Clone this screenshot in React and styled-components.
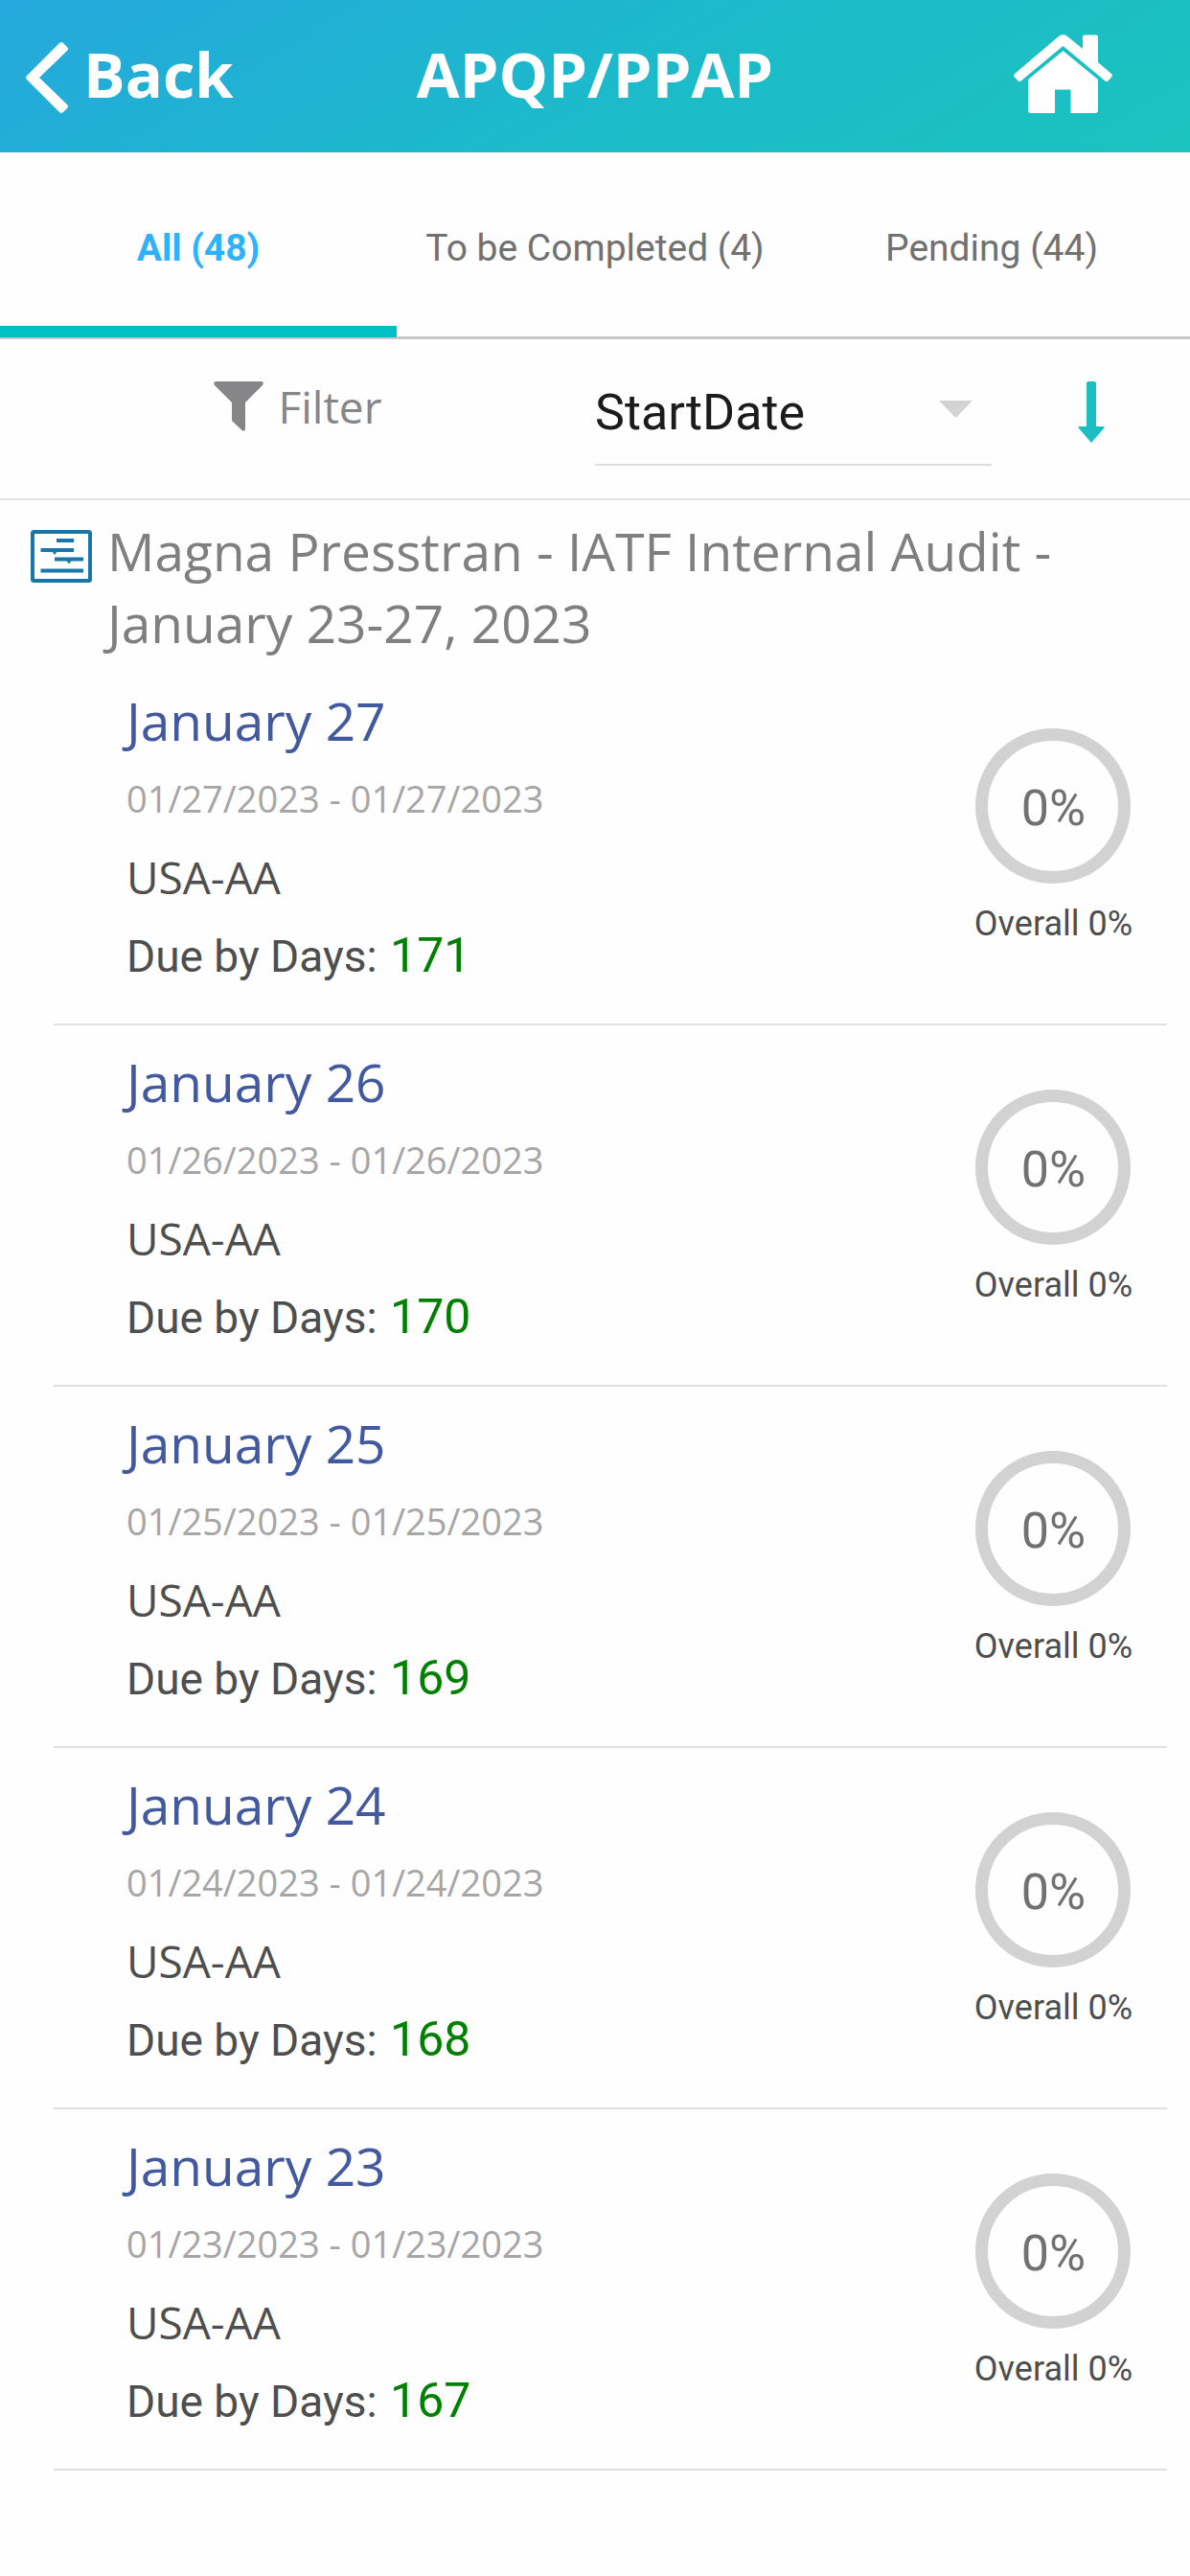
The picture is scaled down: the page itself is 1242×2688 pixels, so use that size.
import React, { useState } from 'react'
import styled, { createGlobalStyle } from 'styled-components'

const GlobalStyle = createGlobalStyle`
  * {
    box-sizing: border-box;
  }
  body {
    margin: 0;
    background: #fefefe;
    font-family: 'Open Sans', sans-serif;
  }
  button {
    padding: 0;
    border: none;
    background: none;
    font: inherit;
    color: inherit;
    cursor: pointer;
  }
  svg {
    display: block;
    flex-shrink: 0;
  }
`

const Header = styled.header`
  display: grid;
  grid-template-columns: 1fr auto 1fr;
  align-items: center;
  height: 159px;
  padding: 0 27px 5px;
  background: linear-gradient(150deg, #25a8dd 0%, #1bbcc8 60%, #1bc3be 100%);
  color: #fff;
  font-size: 65px;
  font-weight: 700;
  line-height: 90px;
`

const BackButton = styled.button`
  display: flex;
  align-items: center;
  gap: 16px;
  justify-self: start;

  svg {
    margin-top: 8px;
  }
`

const Title = styled.h1`
  margin: 0;
  font-size: inherit;
  text-align: center;
`

const HomeLink = styled.a`
  justify-self: end;
  margin-right: 54px;
  color: inherit;
`

const Tabs = styled.div`
  display: grid;
  grid-template-columns: repeat(3, 1fr);
  border-bottom: 3px solid #c8c8c8;
`

const Tab = styled.button`
  height: 193px;
  margin-bottom: -1px;
  padding-top: 18px;
  border-bottom: 12px solid ${({ $active }) => ($active ? '#00bfc5' : 'transparent')};
  color: ${({ $active }) => ($active ? '#2fb2fb' : '#717171')};
  font-family: Roboto, sans-serif;
  font-size: 39px;
  font-weight: ${({ $active }) => ($active ? 700 : 400)};
`

const Toolbar = styled.div`
  display: grid;
  grid-template-columns: 3fr 2fr 1fr;
  height: 168px;
  padding-top: 24px;
  border-bottom: 2px solid #e0e0e0;
`

const FilterButton = styled.button`
  display: flex;
  align-items: center;
  justify-content: center;
  gap: 16px;
  height: 92px;
  color: #868688;
  font-size: 46px;
`

const SelectWrap = styled.div`
  position: relative;
  height: 108px;
  border-bottom: 2px solid #dcdcdc;
`

const Select = styled.select`
  width: 100%;
  height: 104px;
  padding: 0;
  border: none;
  appearance: none;
  background: transparent;
  color: #1b1b1b;
  font-family: Roboto, sans-serif;
  font-size: 52px;
`

const Caret = styled.svg`
  position: absolute;
  top: 40px;
  right: 20px;
  pointer-events: none;
`

const SortButton = styled.button`
  display: flex;
  align-items: center;
  justify-content: center;
  height: 104px;
`

const Group = styled.section`
  padding: 15px 24px 0 32px;
`

const GroupTitle = styled.h2`
  display: flex;
  gap: 16px;
  margin: 0 0 6px;
  color: #7f7f7f;
  font-size: 55px;
  font-weight: 400;
  line-height: 75px;

  svg {
    margin-top: 16px;
  }
`

const List = styled.ul`
  margin: 0;
  padding: 0 0 0 24px;
  list-style: none;
`

const Item = styled.li`
  display: flex;
  justify-content: space-between;
  height: 377px;
  padding: 19px 36px 0 76px;
  border-bottom: 2px solid #e0e0e0;
`

const Day = styled.h3`
  margin: 0;
  color: #43599f;
  font-size: 55px;
  font-weight: 400;
  line-height: 80px;
`

const Line = styled.p`
  margin: 0;
  color: #4e4e4e;
  font-size: 46px;
  line-height: 82px;
`

const Range = styled(Line)`
  color: #a6a6a6;
  font-size: 38px;
`

const Due = styled(Line)`
  font-family: Roboto, sans-serif;
`

const DueDays = styled.span`
  margin-left: 2px;
  color: #008000;
  font-size: 50px;
`

const Progress = styled.div`
  display: flex;
  flex-direction: column;
  align-items: center;
  gap: 20px;
  padding-top: 48px;
  color: #4e4e4e;
  font-family: Roboto, sans-serif;
  font-size: 36px;
  line-height: 44px;
`

const Ring = styled.div`
  display: flex;
  align-items: center;
  justify-content: center;
  width: 162px;
  height: 162px;
  padding-top: 6px;
  border: 13px solid #d2d2d2;
  border-radius: 50%;
  color: #717171;
  font-size: 52px;
`

const TABS = ['All (48)', 'To be Completed (4)', 'Pending (44)']

const AUDITS = [
  { day: 'January 27', date: '01/27/2023', due: 171 },
  { day: 'January 26', date: '01/26/2023', due: 170 },
  { day: 'January 25', date: '01/25/2023', due: 169 },
  { day: 'January 24', date: '01/24/2023', due: 168 },
  { day: 'January 23', date: '01/23/2023', due: 167 },
]

function BackIcon() {
  return (
    <svg width="44" height="74" viewBox="0 0 44 74" fill="#fff" aria-hidden="true">
      <path d="M35 1q2-2 4 0l4 4q2 2 0 4L14 37l29 28q2 2 0 4l-4 4q-2 2-4 0L1 39q-2-2 0-4z" />
    </svg>
  )
}

function HomeIcon() {
  return (
    <svg width="103" height="82" viewBox="0 0 103 82" fill="#fff" aria-hidden="true">
      <path d="M47.5 1.5Q51.5-1 55.5 1.5L72 15V2.5Q72 .5 74 .5H86Q88 .5 88 2.5V29L102 41Q103.500 42.5 102.5 44L98.5 48.5Q97 50 95.5 48.5L51.5 12 7.5 48.5Q6 50 4.5 48.5L.5 44Q-.5 42.5 1 41z" />
      <path d="M51.5 17 88 47V79Q88 82 85 82H59.5V57.5H43V82H18Q15 82 15 79V47z" />
    </svg>
  )
}

function FunnelIcon() {
  return (
    <svg width="52" height="52" viewBox="0 0 52 52" fill="currentColor" aria-hidden="true">
      <path d="M2 0H50Q53 1 51 4L33 22V50Q32 53 29.5 51L19 41V22L1 4Q-1 1 2 0z" />
    </svg>
  )
}

function SortIcon() {
  return (
    <svg width="28" height="64" viewBox="0 0 28 64" fill="#1bbfc2" aria-hidden="true">
      <path d="M11 0h6q2 0 2 2v45h7q3 0 1 2L14 64 1 49q-2-2 1-2h7V2q0-2 2-2z" />
    </svg>
  )
}

function AuditIcon() {
  return (
    <svg width="64" height="55" viewBox="0 0 64 55" fill="none" stroke="#1976a8" strokeWidth="4" aria-hidden="true">
      <rect x="2" y="2" width="60" height="51" rx="1.5" />
      <path d="M27 11H45M10.5 21H45M25 30.5H55M10.5 42.5H55" />
      <path d="M22 22h6l-3 4zM37 31.5h6l-3 4z" fill="#1976a8" stroke="none" />
    </svg>
  )
}

function AuditItem({ day, date, due }) {
  return (
    <Item>
      <div>
        <Day>{day}</Day>
        <Range>
          {date} - {date}
        </Range>
        <Line>USA-AA</Line>
        <Due>
          Due by Days: <DueDays>{due}</DueDays>
        </Due>
      </div>
      <Progress>
        <Ring>0%</Ring>
        <span>Overall 0%</span>
      </Progress>
    </Item>
  )
}

export default function App() {
  const [active, setActive] = useState(0)

  return (
    <>
      <GlobalStyle />
      <Header>
        <BackButton type="button">
          <BackIcon />
          Back
        </BackButton>
        <Title>APQP/PPAP</Title>
        <HomeLink href="#home" aria-label="Home">
          <HomeIcon />
        </HomeLink>
      </Header>
      <Tabs role="tablist">
        {TABS.map((label, i) => (
          <Tab key={label} type="button" role="tab" aria-selected={i === active} $active={i === active} onClick={() => setActive(i)}>
            {label}
          </Tab>
        ))}
      </Tabs>
      <Toolbar>
        <FilterButton type="button">
          <FunnelIcon />
          Filter
        </FilterButton>
        <SelectWrap>
          <Select aria-label="Sort by" defaultValue="StartDate">
            <option>StartDate</option>
          </Select>
          <Caret width="35" height="18" viewBox="0 0 35 18" fill="#d3d3d3" aria-hidden="true">
            <path d="M0 0H35L17.5 18z" />
          </Caret>
        </SelectWrap>
        <SortButton type="button" aria-label="Sort direction">
          <SortIcon />
        </SortButton>
      </Toolbar>
      <Group>
        <GroupTitle>
          <AuditIcon />
          Magna Presstran - IATF Internal Audit - January 23-27, 2023
        </GroupTitle>
        <List>
          {AUDITS.map((audit) => (
            <AuditItem key={audit.day} {...audit} />
          ))}
        </List>
      </Group>
    </>
  )
}
